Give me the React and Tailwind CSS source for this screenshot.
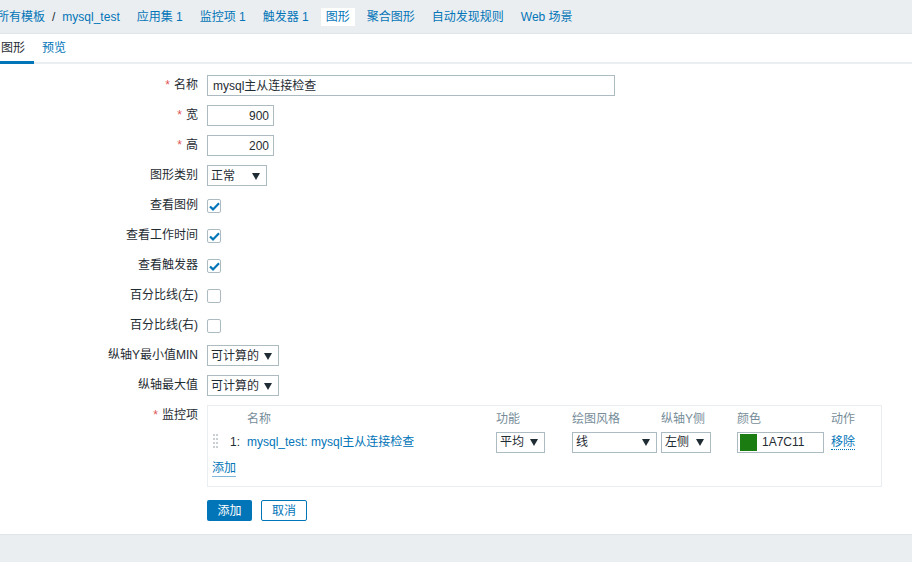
import React from "react";

const FONT = { fontFamily: '"Liberation Sans", Arial, "Noto Sans CJK SC", sans-serif' };

function Arrow() {
  return (
    <svg width="8" height="8" viewBox="0 0 8 8" className="shrink-0">
      <path d="M0 1 L8 1 L4 8 Z" fill="#1f2c33" />
    </svg>
  );
}

function Select({ value, w }) {
  return (
    <div
      className={`flex h-[21px] items-center justify-between border border-[#acbbc2] bg-white pl-[3px] pr-[6px] text-[12px] text-[#1f2c33] ${w}`}
    >
      <span>{value}</span>
      <Arrow />
    </div>
  );
}

function Checkbox({ checked }) {
  return (
    <div className="mt-[4px] flex h-[14px] w-[14px] items-center justify-center rounded-[2px] border border-[#acbbc2] bg-white">
      {checked && (
        <svg width="11" height="9" viewBox="0 0 11 9">
          <path d="M1 4.5 L4 7.4 L10 1.3" fill="none" stroke="#0275b8" strokeWidth="2.2" />
        </svg>
      )}
    </div>
  );
}

function Label({ children, req }) {
  return (
    <div className="h-[21px] text-right text-[12px] leading-[21px] text-[#1f2c33]">
      {req && <span className="mr-[4px] text-[#e05555]">*</span>}
      {children}
    </div>
  );
}

function NavItem({ children, active }) {
  return (
    <div
      className={`flex h-[18px] items-center px-[5px] text-[12px] text-[#0275b8] ${
        active ? "bg-white" : ""
      }`}
    >
      {children}
    </div>
  );
}

export default function App() {
  return (
    <div className="flex h-[562px] w-[912px] flex-col overflow-hidden bg-white" style={FONT}>
      {/* top nav */}
      <div className="flex h-[34px] shrink-0 items-center border-b border-[#dfe4e7] bg-[#ebeef0]">
        <div className="-ml-[3px] flex items-center text-[12px] text-[#0275b8]">
          <span>所有模板</span>
          <span className="mx-[7px] text-[#1f2c33]">/</span>
          <span>mysql_test</span>
        </div>
        <div className="ml-[12px] flex items-center gap-[7px]">
          <NavItem>应用集 1</NavItem>
          <NavItem>监控项 1</NavItem>
          <NavItem>触发器 1</NavItem>
          <NavItem active>图形</NavItem>
          <NavItem>聚合图形</NavItem>
          <NavItem>自动发现规则</NavItem>
          <NavItem>Web 场景</NavItem>
        </div>
      </div>

      {/* tabs */}
      <div className="flex h-[30px] shrink-0 items-stretch border-b-[2px] border-[#ebeef0] text-[12px]">
        <div className="-mb-[2px] flex w-[34px] items-center justify-center border-b-[3px] border-[#0275b8] pr-[8px] text-[#1f2c33]">
          图形
        </div>
        <div className="ml-[8px] flex items-center text-[#0275b8]">预览</div>
      </div>

      {/* form */}
      <div className="flex-1 pt-[11px]">
        <div className="grid grid-cols-[198px_auto] gap-x-[9px] gap-y-[9px]">
          <Label req>名称</Label>
          <div className="flex h-[21px] w-[408px] items-center border border-[#acbbc2] px-[5px] text-[12px] text-[#1f2c33]">
            mysql主从连接检查
          </div>

          <Label req>宽</Label>
          <div className="flex h-[21px] w-[67px] items-center justify-end border border-[#acbbc2] px-[4px] text-[12px] text-[#1f2c33]">
            900
          </div>

          <Label req>高</Label>
          <div className="flex h-[21px] w-[67px] items-center justify-end border border-[#acbbc2] px-[4px] text-[12px] text-[#1f2c33]">
            200
          </div>

          <Label>图形类别</Label>
          <div>
            <Select value="正常" w="w-[60px]" />
          </div>

          <Label>查看图例</Label>
          <Checkbox checked />
          <Label>查看工作时间</Label>
          <Checkbox checked />
          <Label>查看触发器</Label>
          <Checkbox checked />
          <Label>百分比线(左)</Label>
          <Checkbox />
          <Label>百分比线(右)</Label>
          <Checkbox />

          <Label>纵轴Y最小值MIN</Label>
          <div>
            <Select value="可计算的" w="w-[72px]" />
          </div>
          <Label>纵轴最大值</Label>
          <div>
            <Select value="可计算的" w="w-[72px]" />
          </div>

          <Label req>监控项</Label>
          <div className="h-[82px] w-[675px] border border-[#ebeef0] pl-[4px] text-[12px]">
            <div className="grid h-[25px] grid-cols-[18px_17px_249px_76px_89px_76px_94px_50px] items-center text-[#768d99]">
              <div />
              <div />
              <div>名称</div>
              <div>功能</div>
              <div>绘图风格</div>
              <div>纵轴Y侧</div>
              <div>颜色</div>
              <div>动作</div>
            </div>
            <div className="grid h-[22px] grid-cols-[18px_17px_249px_76px_89px_76px_94px_50px] items-center">
              <div className="flex h-[16px] gap-[1px] pl-[1px]">
                <div className="w-[2px] bg-[repeating-linear-gradient(to_bottom,#c8d0d4_0_2px,transparent_2px_4px)]" />
                <div className="w-[2px] bg-[repeating-linear-gradient(to_bottom,#c8d0d4_0_2px,transparent_2px_4px)]" />
              </div>
              <div className="text-[#1f2c33]">1:</div>
              <div className="text-[#0275b8]">mysql_test: mysql主从连接检查</div>
              <div>
                <Select value="平均" w="w-[49px]" />
              </div>
              <div>
                <Select value="线" w="w-[85px]" />
              </div>
              <div>
                <Select value="左侧" w="w-[50px]" />
              </div>
              <div>
                <div className="flex h-[21px] w-[87px] items-center gap-[5px] border border-[#acbbc2] pl-[2px] text-[#1f2c33]">
                  <div className="h-[17px] w-[17px] bg-[#1a7c11]" />
                  <span>1A7C11</span>
                </div>
              </div>
              <div>
                <span className="border-b border-dotted border-[#0275b8] text-[#0275b8]">移除</span>
              </div>
            </div>
            <div className="flex h-[31px] items-center">
              <span className="border-b border-[#7fb6d9] leading-[15px] text-[#0275b8]">添加</span>
            </div>
          </div>

          <div />
          <div className="mt-[4px] flex gap-[9px]">
            <div className="flex h-[21px] w-[45px] items-center justify-center rounded-[2px] bg-[#0275b8] text-[12px] text-white">
              添加
            </div>
            <div className="flex h-[21px] w-[46px] items-center justify-center rounded-[2px] border border-[#0275b8] bg-white text-[12px] text-[#0275b8]">
              取消
            </div>
          </div>
        </div>
      </div>

      {/* footer */}
      <div className="h-[28px] shrink-0 border-t border-[#dfe4e7] bg-[#ebeef0]" />
    </div>
  );
}
